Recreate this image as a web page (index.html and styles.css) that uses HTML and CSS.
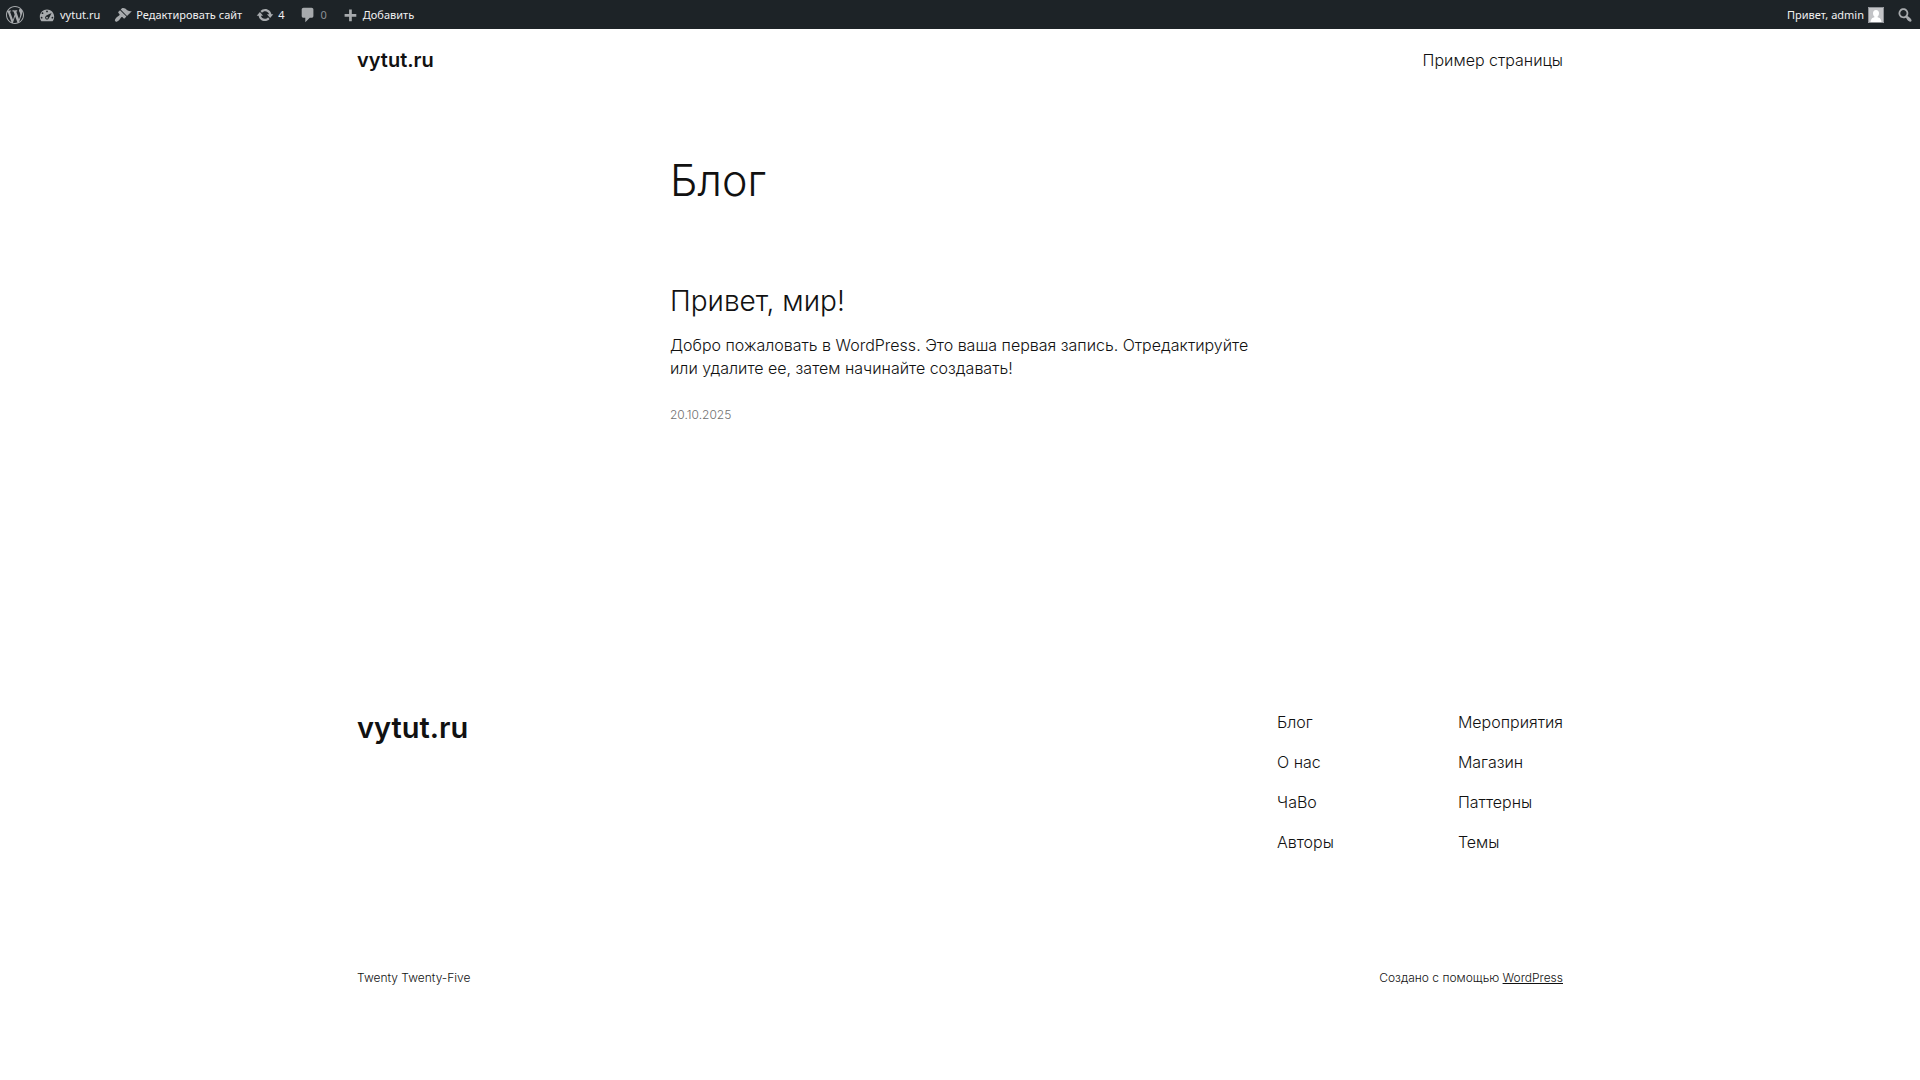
FILE: index.html
```
<!DOCTYPE html>
<html lang="ru">

<head>
    <meta charset="UTF-8">
    <meta name="viewport" content="width=device-width, initial-scale=1.0">
    <title>vytut.ru</title>
    <link rel="stylesheet" href="styles.css">
</head>

<body>
    <nav class="adminbar">
        <div class="adminbar-group adminbar-main">
            <a class="ab-item" href="#" aria-label="WordPress">
                <svg class="ab-icon" viewBox="0 0 20 20"><path d="M20 10c0-5.51-4.49-10-10-10C4.48 0 0 4.49 0 10c0 5.52 4.48 10 10 10 5.51 0 10-4.48 10-10zM7.78 15.37L4.37 6.22c.55-.02 1.17-.08 1.17-.08.5-.06.44-1.13-.06-1.11 0 0-1.45.11-2.37.11-.18 0-.37 0-.58-.01C4.12 2.69 6.87 1.11 10 1.11c2.33 0 4.45.87 6.05 2.34-.68-.11-1.65.39-1.65 1.58 0 .74.45 1.36.9 2.1.35.61.55 1.36.55 2.46 0 1.49-1.4 5-1.4 5l-3.03-8.37c.54-.02.82-.17.82-.17.5-.05.44-1.25-.06-1.22 0 0-1.44.12-2.38.12-.87 0-2.33-.12-2.33-.12-.5-.03-.56 1.2-.06 1.22l.92.08 1.26 3.41zM17.41 10c.24-.64.74-1.87.43-4.25.7 1.29 1.05 2.71 1.05 4.25 0 3.29-1.73 6.24-4.4 7.78.97-2.59 1.94-5.2 2.92-7.78zM6.1 18.09C3.12 16.65 1.11 13.53 1.11 10c0-1.3.23-2.48.72-3.59C3.25 10.3 4.67 14.2 6.1 18.09zm4.03-6.63l2.58 6.98c-.86.29-1.76.45-2.71.45-.79 0-1.57-.11-2.29-.33.81-2.38 1.62-4.74 2.42-7.1z"/></svg>
            </a>
            <a class="ab-item" href="#">
                <svg class="ab-icon" viewBox="0 0 20 20"><path d="M3.76 17.01h12.48C17.34 15.63 18 13.9 18 12c0-4.41-3.58-8-8-8s-8 3.59-8 8c0 1.9.66 3.63 1.76 5.01zM9 6c0-.55.45-1 1-1s1 .45 1 1c0 .56-.45 1-1 1s-1-.44-1-1zM4 8c0-.55.45-1 1-1s1 .45 1 1c0 .56-.45 1-1 1s-1-.44-1-1zm4.52 3.4c.84-.83 6.51-3.5 6.51-3.5s-2.66 5.68-3.49 6.51c-.84.84-2.18.84-3.02 0-.83-.83-.83-2.18 0-3.01zM3 13c0-.55.45-1 1-1s1 .45 1 1c0 .56-.45 1-1 1s-1-.44-1-1zm6 0c0 .56.45 1 1 1s1-.44 1-1c0-.55-.45-1-1-1s-1 .45-1 1zm6 0c0-.55.45-1 1-1s1 .45 1 1c0 .56-.45 1-1 1s-1-.44-1-1z" fill-rule="evenodd"/></svg>
                <span>vytut.ru</span>
            </a>
            <a class="ab-item" href="#">
                <svg class="ab-icon" viewBox="0 0 20 20"><path d="M14.48 11.06L7.41 3.99l1.5-1.5c.5-.56 2.3-.47 3.51.32 1.21.8 1.43 1.28 2.91 2.1 1.18.64 2.45 1.26 4.45.85zm-.71.71L6.7 4.7 4.93 6.47c-.39.39-.39 1.02 0 1.41l1.06 1.06c.39.39.39 1.03 0 1.42-.6.6-1.43 1.11-2.21 1.69-.35.26-.7.53-1.01.84C1.43 14.23.4 16.08 1.4 17.07c.99 1 2.84-.03 4.18-1.36.31-.31.58-.66.85-1.02.57-.78 1.08-1.61 1.69-2.21.39-.39 1.02-.39 1.41 0l1.06 1.06c.39.39 1.02.39 1.41 0z"/></svg>
                <span>Редактировать сайт</span>
            </a>
            <a class="ab-item" href="#">
                <svg class="ab-icon" viewBox="0 0 20 20"><path d="M10.2 3.28c3.53 0 6.43 2.61 6.92 6h2.08l-3.5 4-3.5-4h2.32c-.45-1.97-2.21-3.45-4.32-3.45-1.45 0-2.73.71-3.54 1.78L4.95 5.66C6.23 4.2 8.11 3.28 10.2 3.28zm-.4 13.44c-3.52 0-6.43-2.61-6.92-6H.8l3.5-4c1.17 1.33 2.33 2.67 3.5 4H5.48c.45 1.97 2.21 3.45 4.32 3.45 1.45 0 2.73-.71 3.54-1.78l1.71 1.95c-1.28 1.46-3.15 2.38-5.25 2.38z"/></svg>
                <span>4</span>
            </a>
            <a class="ab-item" href="#">
                <svg class="ab-icon" viewBox="0 0 20 20"><path d="M5 2h9c1.1 0 2 .9 2 2v7c0 1.1-.9 2-2 2h-2l-5 5v-5H5c-1.1 0-2-.9-2-2V4c0-1.1.9-2 2-2z"/></svg>
                <span class="count-zero">0</span>
            </a>
            <a class="ab-item" href="#">
                <svg class="ab-icon" viewBox="0 0 20 20"><path d="M17 9v3h-5v5H9v-5H4V9h5V4h3v5h5z"/></svg>
                <span>Добавить</span>
            </a>
        </div>
        <div class="adminbar-group">
            <a class="ab-item" href="#">
                <span>Привет, admin</span>
                <svg class="avatar" viewBox="0 0 16 16"><path fill="#c3c4c7" d="M0 0h16v16H0z"/><path fill="#fff" d="M8 3c2 0 3 1.300 3 3.200 0 1.500-.6 2.600-1.400 3.200v.8c2 .5 3.400 1.300 3.900 4.800H2.500c.5-3.500 1.900-4.300 3.900-4.800v-.8C5.600 8.800 5 7.700 5 6.200 5 4.300 6 3 8 3z"/><path fill="none" stroke="#8c8f94" d="M.5.5h15v15H.5z"/></svg>
            </a>
            <a class="ab-item" href="#" aria-label="Поиск">
                <svg class="ab-icon" viewBox="0 0 20 20"><path d="M12.14 4.18c1.87 1.87 2.11 4.75.72 6.89.12.1.22.21.36.31.2.16.47.36.81.59.34.24.56.39.66.47.42.31.73.57.94.78.32.32.6.65.84 1 .25.35.44.69.59 1.04.14.35.21.68.18 1-.02.32-.14.59-.36.81s-.49.34-.81.36c-.31.02-.65-.04-.99-.19-.35-.14-.7-.34-1.04-.59-.35-.24-.68-.52-1-.84-.21-.21-.47-.52-.77-.93-.1-.13-.25-.35-.47-.66-.22-.32-.4-.57-.56-.78-.16-.2-.29-.35-.44-.5-2.07 1.09-4.69.76-6.44-.98-2.14-2.15-2.14-5.64 0-7.78 2.15-2.15 5.63-2.15 7.78 0zm-1.41 6.360c1.36-1.37 1.36-3.58 0-4.950-1.37-1.37-3.59-1.37-4.950 0-1.37 1.37-1.37 3.58 0 4.950 1.36 1.37 3.58 1.37 4.950 0z"/></svg>
            </a>
        </div>
    </nav>

    <header class="site-header wide">
        <a class="site-title" href="#">vytut.ru</a>
        <nav>
            <a href="#">Пример страницы</a>
        </nav>
    </header>

    <main class="content">
        <h1>Блог</h1>
        <article class="post">
            <h2><a href="#">Привет, мир!</a></h2>
            <p>Добро пожаловать в WordPress. Это ваша первая запись. Отредактируйте или удалите ее, затем начинайте создавать!</p>
            <a class="post-date" href="#"><time datetime="2025-10-20">20.10.2025</time></a>
        </article>
    </main>

    <footer class="site-footer wide">
        <div class="footer-top">
            <a class="footer-title" href="#">vytut.ru</a>
            <nav class="footer-menus">
                <ul>
                    <li><a href="#">Блог</a></li>
                    <li><a href="#">О нас</a></li>
                    <li><a href="#">ЧаВо</a></li>
                    <li><a href="#">Авторы</a></li>
                </ul>
                <ul>
                    <li><a href="#">Мероприятия</a></li>
                    <li><a href="#">Магазин</a></li>
                    <li><a href="#">Паттерны</a></li>
                    <li><a href="#">Темы</a></li>
                </ul>
            </nav>
        </div>
        <div class="footer-bottom">
            <p>Twenty Twenty-Five</p>
            <p>Создано с помощью <a class="wp-link" href="#">WordPress</a></p>
        </div>
    </footer>
</body>

</html>
```

FILE: styles.css
```
* {
    box-sizing: border-box;
}

body {
    margin: 0;
    background: #fff;
    color: #111;
    font-family: Inter, "Noto Sans", sans-serif;
    font-size: 16px;
    font-weight: 300;
    line-height: 23px;
}

a {
    color: inherit;
    text-decoration: none;
}

a:hover {
    text-decoration: underline;
}

h1,
h2,
p,
ul {
    margin: 0;
    padding: 0;
    font-weight: 300;
}

.wide {
    max-width: 1206px;
    margin: 0 auto;
}

/* admin bar */
.adminbar {
    display: flex;
    justify-content: space-between;
    height: 29px;
    background: #1d2327;
    color: #f0f0f1;
    font-family: "Noto Sans", "Open Sans", sans-serif;
    font-size: 11px;
    font-weight: 400;
}

.adminbar-group {
    display: flex;
}

.adminbar-main {
    gap: 2px;
}

.ab-item {
    display: flex;
    align-items: center;
    gap: 4px;
    padding: 0 6px;
}

.ab-icon {
    width: 18px;
    height: 18px;
    fill: #a7aaad;
}

.avatar {
    width: 16px;
    height: 16px;
}

.count-zero {
    color: #8c8f94;
}

/* header */
.site-header {
    display: flex;
    justify-content: space-between;
    align-items: center;
    padding: 20px 0;
}

.site-title {
    font-size: 20px;
    font-weight: 600;
}

/* posts */
.content {
    max-width: 580px;
    margin: 0 auto;
    padding-top: 63px;
}

h1 {
    font-size: 43px;
    line-height: 50px;
}

.post {
    padding: 79px 0;
}

h2 {
    font-size: 28px;
    line-height: 34px;
    margin-bottom: 16px;
}

.post-date {
    display: block;
    margin-top: 23px;
    color: #707070;
    font-size: 12px;
}

/* footer */
.site-footer {
    padding: 206px 0 72px;
}

.footer-top,
.footer-bottom {
    display: flex;
    justify-content: space-between;
}

.footer-title {
    font-size: 29px;
    font-weight: 600;
    line-height: 34px;
}

.footer-menus {
    display: flex;
    gap: 124px;
}

.footer-menus ul {
    display: flex;
    flex-direction: column;
    gap: 17px;
    list-style: none;
}

.footer-bottom {
    padding-top: 112px;
    font-size: 12px;
}

.wp-link {
    text-decoration: underline;
}
```
